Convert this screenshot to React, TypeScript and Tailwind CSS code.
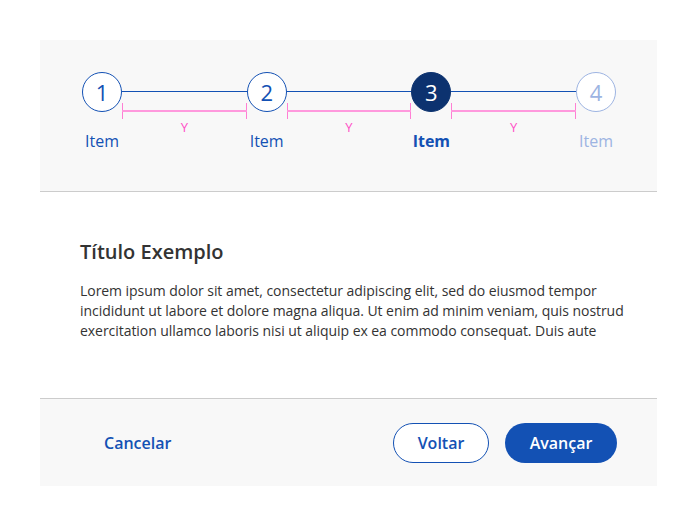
import React from "react";

type Step = { n: number; state: "done" | "active" | "todo" };

const steps: Step[] = [
  { n: 1, state: "done" },
  { n: 2, state: "done" },
  { n: 3, state: "active" },
  { n: 4, state: "todo" },
];

function StepItem({ step }: { step: Step }) {
  const circle =
    step.state === "active"
      ? "bg-[#0c326f] text-white border-[#0c326f]"
      : step.state === "done"
      ? "bg-white text-[#1351b4] border-[#1351b4]"
      : "bg-white text-[#9db4e2] border-[#9db4e2]";
  const label =
    step.state === "active"
      ? "text-[#1351b4] font-bold"
      : step.state === "done"
      ? "text-[#1351b4]"
      : "text-[#9db4e2]";
  return (
    <div className="flex flex-col items-center w-10 shrink-0">
      <div
        className={`w-10 h-10 rounded-full border flex items-center justify-center text-[22px] leading-none ${circle}`}
      >
        {step.n}
      </div>
      <span className={`mt-[19px] text-base leading-5 whitespace-nowrap ${label}`}>Item</span>
    </div>
  );
}

function Connector() {
  return (
    <div className="relative flex-1 h-10">
      <div className="absolute left-0 right-0 top-[19px] h-px bg-[#1351b4]" />
      {/* medida (anotação) */}
      <div className="absolute left-0 right-0 top-[31px] h-4">
        <div className="absolute left-0 top-0 h-4 w-px bg-[#ff7fd4]" />
        <div className="absolute right-0 top-0 h-4 w-px bg-[#ff7fd4]" />
        <div className="absolute left-0 right-0 top-[7px] h-[2px] bg-[#ff99dd]" />
      </div>
      <span className="absolute left-0 right-0 top-[47px] text-center text-[13px] leading-4 text-[#ff4fc6]">
        Y
      </span>
    </div>
  );
}

export default function App() {
  return (
    <div className="min-h-screen bg-white p-10 font-['Open_Sans','Noto_Sans',sans-serif]">
      <div className="w-[617px] bg-white">
        {/* Stepper */}
        <div className="bg-[#f8f8f8] h-[152px] border-b border-[#cccccc] px-[42px] pt-[32px]">
          <div className="flex items-start w-[534px]">
            {steps.map((s, i) => (
              <React.Fragment key={s.n}>
                <StepItem step={s} />
                {i < steps.length - 1 && <Connector />}
              </React.Fragment>
            ))}
          </div>
        </div>

        {/* Conteúdo */}
        <div className="h-[207px] border-b border-[#cccccc] px-10 pt-[46px]">
          <h2 className="text-xl leading-7 font-semibold text-[#333333]">Título Exemplo</h2>
          <p className="mt-[15px] text-sm leading-5 text-[#333333] whitespace-nowrap tracking-[-0.05px]">
            Lorem ipsum dolor sit amet, consectetur adipiscing elit, sed do eiusmod tempor
            <br />
            incididunt ut labore et dolore magna aliqua. Ut enim ad minim veniam, quis nostrud
            <br />
            exercitation ullamco laboris nisi ut aliquip ex ea commodo consequat. Duis aute
          </p>
        </div>

        {/* Rodapé */}
        <div className="bg-[#f8f8f8] h-[87px] px-10 flex items-center">
          <button className="h-10 px-6 rounded-full text-base font-semibold text-[#1351b4]">
            Cancelar
          </button>
          <div className="ml-auto flex gap-4">
            <button className="h-10 w-24 rounded-full border border-[#1351b4] bg-white text-base font-semibold text-[#1351b4]">
              Voltar
            </button>
            <button className="h-10 w-28 rounded-full bg-[#1351b4] text-base font-semibold text-white">
              Avançar
            </button>
          </div>
        </div>
      </div>
    </div>
  );
}
